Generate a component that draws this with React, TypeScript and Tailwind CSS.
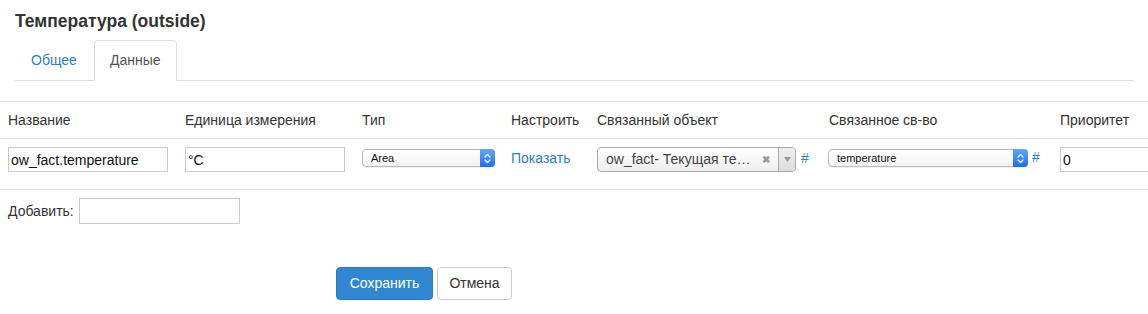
import React from "react";

const font = { fontFamily: '"Liberation Sans", Arial, sans-serif' };

function MacSelect({ value, width }: { value: string; width: string }) {
  return (
    <div
      className={`relative flex h-[18px] items-center rounded-[4px] border border-[#b9b9b9] bg-gradient-to-b from-white to-[#f3f3f3] shadow-[0_1px_0_rgba(0,0,0,0.05)] ${width}`}
    >
      <span className="pl-[8px] text-[11px] leading-none text-[#111]">{value}</span>
      <div className="absolute -right-px -top-px flex h-[18px] w-[15px] items-center justify-center rounded-r-[4px] bg-gradient-to-b from-[#5ea8ff] to-[#1a6cf0]">
        <svg width="7" height="11" viewBox="0 0 7 11" fill="none" stroke="white" strokeWidth="1.3" strokeLinecap="round" strokeLinejoin="round">
          <path d="M1 4 L3.5 1.5 L6 4" />
          <path d="M1 7 L3.5 9.5 L6 7" />
        </svg>
      </div>
    </div>
  );
}

function Hash() {
  return <span className="text-[14px] leading-5 text-[#2f7ec5]">#</span>;
}

export default function App() {
  const headers = [
    "Название",
    "Единица измерения",
    "Тип",
    "Настроить",
    "Связанный объект",
    "Связанное св-во",
    "Приоритет",
  ];

  return (
    <div className="h-[314px] w-[1148px] overflow-hidden bg-white text-[14px] text-[#333]" style={font}>
      <div className="px-[15px]">
        <h4 className="h-[40px] pt-[11px] text-[17.5px] font-bold leading-5 text-[#333]">Температура (outside)</h4>
        <ul className="flex border-b border-[#ddd]">
          <li className="-mb-px mr-[2px]">
            <a className="flex h-[41px] w-[77px] items-center rounded-t-[4px] border border-transparent px-[15px] text-[#2f7ec5]">
              Общее
            </a>
          </li>
          <li className="-mb-px">
            <a className="flex h-[41px] w-[83px] items-center rounded-t-[4px] border border-[#ddd] border-b-white bg-white px-[15px] text-[#555]">
              Данные
            </a>
          </li>
        </ul>
      </div>

      <div className="mt-[20px] w-[1260px]">
        <div className="grid grid-cols-[177px_177px_149px_86px_232px_231px_208px] border-t border-[#ddd]">
          {headers.map((h) => (
            <div key={h} className="whitespace-nowrap px-[8px] py-[8px] leading-5">
              {h}
            </div>
          ))}
        </div>

        <div className="grid h-[51px] grid-cols-[177px_177px_149px_86px_232px_231px_208px] border-t border-[#ddd]">
          <div className="px-[8px] pt-[8px]">
            <input
              readOnly
              value="ow_fact.temperature"
              className="h-[25px] w-[160px] border border-[#c9c9c9] px-[2px] text-[14px] text-[#111] outline-none"
              style={font}
            />
          </div>
          <div className="px-[8px] pt-[8px]">
            <input
              readOnly
              value="°C"
              className="h-[25px] w-[160px] border border-[#c9c9c9] px-[2px] text-[14px] text-[#111] outline-none"
              style={font}
            />
          </div>
          <div className="px-[8px] pt-[10px]">
            <MacSelect value="Area" width="w-[133px]" />
          </div>
          <div className="px-[8px] pt-[9px]">
            <a className="leading-5 text-[#2f7ec5]">Показать</a>
          </div>
          <div className="flex items-start gap-[5px] px-[8px] pt-[8px]">
            <div className="flex h-[25px] w-[199px] items-center rounded-[4px] border border-[#aaa] bg-gradient-to-b from-white to-[#eee]">
              <span className="flex-1 truncate pl-[8px] text-[14px] text-[#444]">ow_fact- Текущая те…</span>
              <span className="px-[8px] text-[10px] font-bold leading-none text-[#999]">✖</span>
              <div className="flex h-full w-[17px] items-center justify-center rounded-r-[4px] border-l border-[#aaa] bg-gradient-to-b from-[#eee] to-[#ddd]">
                <svg width="7" height="5" viewBox="0 0 7 5">
                  <path d="M0 0 L7 0 L3.5 5 Z" fill="#999" />
                </svg>
              </div>
            </div>
            <div className="pt-[1px]">
              <Hash />
            </div>
          </div>
          <div className="flex items-start gap-[4px] px-[7px] pt-[10px]">
            <MacSelect value="temperature" width="w-[200px]" />
            <div className="-mt-[2px]">
              <Hash />
            </div>
          </div>
          <div className="px-[8px] pt-[8px]">
            <input
              readOnly
              value="0"
              className="h-[25px] w-[160px] border border-[#c9c9c9] px-[2px] text-[14px] text-[#111] outline-none"
              style={font}
            />
          </div>
        </div>

        <div className="flex items-center gap-[5px] border-t border-[#ddd] px-[8px] pt-[8px]">
          <span className="leading-5">Добавить:</span>
          <input
            readOnly
            className="h-[26px] w-[161px] border border-[#c9c9c9] outline-none"
          />
        </div>
      </div>

      <div className="mt-[43px] flex gap-[4px] pl-[336px]">
        <button className="h-[33px] w-[97px] rounded-[4px] border border-[#2c7cc4] bg-[#3086d1] text-[14px] text-white" style={font}>
          Сохранить
        </button>
        <button className="h-[33px] w-[75px] rounded-[4px] border border-[#ccc] bg-white text-[14px] text-[#333]" style={font}>
          Отмена
        </button>
      </div>
    </div>
  );
}
